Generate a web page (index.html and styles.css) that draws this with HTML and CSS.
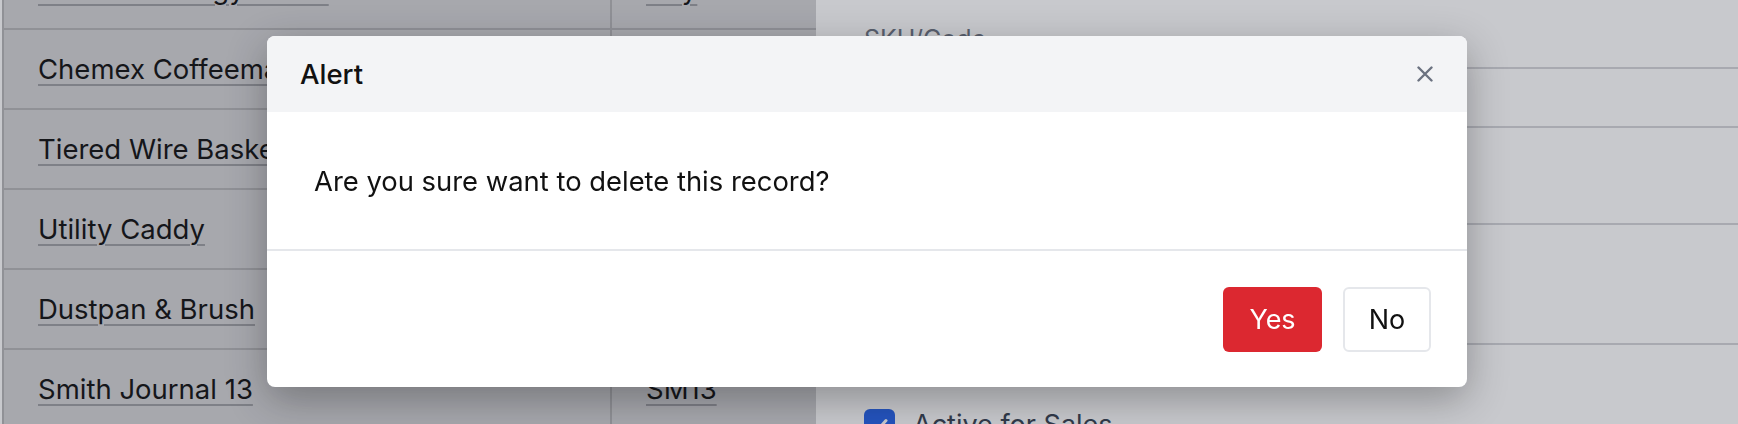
FILE: index.html
```html
<!DOCTYPE html>
<html lang="en">
<head>
    <meta charset="UTF-8">
    <title>Products</title>
    <link rel="stylesheet" href="styles.css">
</head>
<body>
    <div class="page">
        <div class="list">
            <div class="row">
                <div class="cell"><a class="link">Kinfolk Strategy Guide</a></div>
                <div class="cell code"><a class="link">KSy</a></div>
            </div>
            <div class="row">
                <div class="cell"><a class="link">Chemex Coffeemaker</a></div>
                <div class="cell code"><a class="link">CC8</a></div>
            </div>
            <div class="row">
                <div class="cell"><a class="link">Tiered Wire Basket</a></div>
                <div class="cell code"><a class="link">TWB</a></div>
            </div>
            <div class="row">
                <div class="cell"><a class="link">Utility Caddy</a></div>
                <div class="cell code"><a class="link">UC1</a></div>
            </div>
            <div class="row">
                <div class="cell"><a class="link">Dustpan &amp; Brush</a></div>
                <div class="cell code"><a class="link">DB2</a></div>
            </div>
            <div class="row">
                <div class="cell"><a class="link">Smith Journal 13</a></div>
                <div class="cell code"><a class="link">SM13</a></div>
            </div>
        </div>

        <div class="panel">
            <label class="field">
                <span class="field-label">SKU/Code</span>
                <input class="input" type="text" value="SM13">
            </label>
            <label class="field">
                <span class="field-label">Description</span>
                <textarea class="input area"></textarea>
            </label>
            <label class="check">
                <span class="box">
                    <svg width="22" height="22" viewBox="0 0 22 22"><path d="M5 11.5l4 4 8-9" fill="none" stroke="#fff" stroke-width="3" stroke-linecap="round" stroke-linejoin="round"/></svg>
                </span>
                Active for Sales
            </label>
        </div>
    </div>

    <div class="backdrop">
        <div class="modal">
            <div class="modal-header">
                <span class="modal-title">Alert</span>
                <button class="close" type="button">
                    <svg width="16" height="16" viewBox="0 0 16 16"><path d="M1.5 1.5l13 13M14.5 1.5l-13 13" stroke="#6b7280" stroke-width="2.4" stroke-linecap="round"/></svg>
                </button>
            </div>
            <div class="modal-body">Are you sure want to delete this record?</div>
            <div class="modal-footer">
                <button class="btn btn-yes" type="button">Yes</button>
                <button class="btn btn-no" type="button">No</button>
            </div>
        </div>
    </div>
</body>
</html>
```

FILE: styles.css
```css
body
{
    margin: 0;
    overflow: hidden;
    font-family: Inter, "Noto Sans", sans-serif;
    color: #111;
}

.page
{
    display: flex;
    height: 424px;
}

.list
{
    width: 812px;
    flex: none;
    margin-top: -50px;
    margin-left: 2px;
    border-left: 2px solid #b4b4b6;
    background-color: #d3d3d5;
}

.row
{
    display: grid;
    grid-template-columns: 606px 1fr;
    height: 80px;
    box-sizing: border-box;
    border-bottom: 2px solid #b4b4b6;
}

.cell
{
    display: flex;
    align-items: center;
    padding-left: 34px;
    font-size: 27.5px;
}

.code
{
    border-left: 2px solid #b4b4b6;
}

.link
{
    text-decoration: underline;
    text-decoration-color: #9d9ea2;
    text-decoration-thickness: 2px;
    text-underline-offset: 5px;
}

.panel
{
    flex: 1;
    overflow: hidden;
    padding: 24px 0 0 48px;
    background-color: #fff;
    display: flex;
    flex-direction: column;
}

.field
{
    display: flex;
    flex-direction: column;
    margin-bottom: 30px;
}

.field-label
{
    font-size: 25px;
    line-height: 30px;
    color: #6b7280;
    margin-bottom: 13px;
}

.input
{
    width: calc(100% + 20px);
    height: 61px;
    box-sizing: border-box;
    border: 2px solid #d4d5d9;
    border-radius: 6px;
    font-family: inherit;
    font-size: 25px;
    padding: 0 16px;
}

.area
{
    height: 122px;
    margin-top: 22px;
    resize: none;
}

.check
{
    display: flex;
    align-items: center;
    gap: 18px;
    margin-top: 33px;
    font-size: 27px;
    color: #374151;
}

.box
{
    width: 31px;
    height: 31px;
    border-radius: 6px;
    background-color: #2563eb;
    display: flex;
    align-items: center;
    justify-content: center;
}

.backdrop
{
    position: fixed;
    inset: 0;
    background-color: rgba(35, 39, 55, 0.25);
    display: flex;
    justify-content: center;
    align-items: flex-start;
    padding: 36px 4px 0 0;
}

.modal
{
    width: 1200px;
    background-color: #fff;
    border-radius: 8px;
    overflow: hidden;
    box-shadow: 0 12px 40px rgba(0, 0, 0, 0.3);
}

.modal-header
{
    height: 76px;
    background-color: #f3f4f6;
    display: flex;
    align-items: center;
    justify-content: space-between;
    padding: 0 34px 0 33px;
}

.modal-title
{
    font-size: 27.5px;
    font-weight: 500;
}

.close
{
    background: none;
    border: none;
    padding: 0;
    display: flex;
    cursor: pointer;
}

.modal-body
{
    height: 137px;
    display: flex;
    align-items: center;
    padding-left: 47px;
    font-size: 27.4px;
    border-bottom: 2px solid #e5e7eb;
}

.modal-footer
{
    height: 136px;
    display: flex;
    align-items: center;
    justify-content: flex-end;
    gap: 21px;
    padding-right: 36px;
}

.btn
{
    height: 65px;
    border-radius: 6px;
    font-family: inherit;
    font-size: 27px;
    cursor: pointer;
}

.btn-yes
{
    width: 99px;
    background-color: #dc2830;
    color: #fff;
    border: none;
}

.btn-no
{
    width: 88px;
    background-color: #fff;
    color: #111;
    border: 2px solid #e5e7eb;
}
```
